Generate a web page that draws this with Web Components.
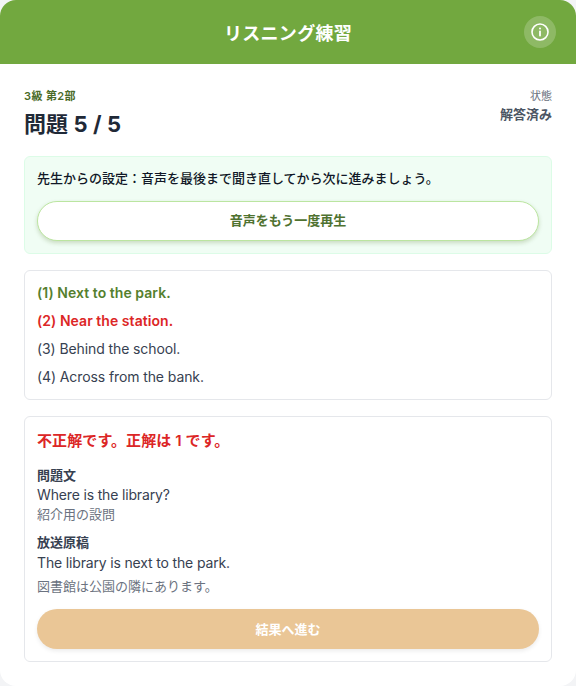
<!DOCTYPE html>
<html lang="ja">
<head>
<meta charset="utf-8">
<title>リスニング練習</title>
<style>
  html, body { margin: 0; background: #f3f4f6; }
  body { font-family: Inter, "Noto Sans CJK JP", sans-serif; }
</style>
</head>
<body>
<listening-app>
  <app-header slot="header" title="リスニング練習"></app-header>
  <question-status level="3級 第2部" heading="問題 5 / 5" label="状態" state="解答済み"></question-status>
  <teacher-note text="先生からの設定：音声を最後まで聞き直してから次に進みましょう。" action="音声をもう一度再生"></teacher-note>
  <choice-list>
    <choice-item kind="correct">(1) Next to the park.</choice-item>
    <choice-item kind="wrong">(2) Near the station.</choice-item>
    <choice-item>(3) Behind the school.</choice-item>
    <choice-item>(4) Across from the bank.</choice-item>
  </choice-list>
  <answer-panel result="不正解です。正解は 1 です。" action="結果へ進む">
    <answer-block heading="問題文" text="Where is the library?" note="紹介用の設問"></answer-block>
    <answer-block heading="放送原稿" text="The library is next to the park." note="図書館は公園の隣にあります。" spaced></answer-block>
  </answer-panel>
</listening-app>
<script>
  const FONT = 'Inter, "Noto Sans CJK JP", sans-serif';

  class ListeningApp extends HTMLElement {
    constructor() {
      super();
      this.attachShadow({mode: 'open'}).innerHTML = `
        <style>
          :host {
            display: block;
            width: 576px;
            height: 686px;
            background: #fff;
            border-radius: 16px;
            overflow: hidden;
            font-family: ${FONT};
          }
          main {
            display: flex;
            flex-direction: column;
            gap: 16px;
            padding: 24px 24px 0;
          }
        </style>
        <slot name="header"></slot>
        <main><slot></slot></main>
      `;
    }
  }

  class AppHeader extends HTMLElement {
    constructor() {
      super();
      this.attachShadow({mode: 'open'}).innerHTML = `
        <style>
          :host {
            display: flex;
            align-items: center;
            justify-content: center;
            position: relative;
            height: 64px;
            background: #72a83f;
            color: #fff;
          }
          h1 { margin: 0; font-size: 18px; font-weight: 700; letter-spacing: .3px; }
          button {
            position: absolute;
            right: 20px;
            top: 16px;
            width: 32px;
            height: 32px;
            padding: 0;
            display: flex;
            align-items: center;
            justify-content: center;
            border: 0;
            border-radius: 50%;
            background: rgba(255, 255, 255, .2);
          }
        </style>
        <h1>${this.getAttribute('title')}</h1>
        <button aria-label="info">
          <svg width="20" height="20" viewBox="0 0 20 20" fill="none" stroke="#fff" stroke-width="1.6" stroke-linecap="round">
            <circle cx="10" cy="10" r="8"/>
            <path d="M10 9.5v4" stroke-width="1.8"/>
            <path d="M10 6.4v.1" stroke-width="2"/>
          </svg>
        </button>
      `;
    }
  }

  class QuestionStatus extends HTMLElement {
    constructor() {
      super();
      const a = n => this.getAttribute(n);
      this.attachShadow({mode: 'open'}).innerHTML = `
        <style>
          :host {
            display: flex;
            justify-content: space-between;
            align-items: flex-start;
            height: 52px;
          }
          .level { font-size: 11px; line-height: 16px; font-weight: 600; color: #4a6b28; letter-spacing: .4px; }
          h2 { margin: 4px 0 0; font-size: 22px; line-height: 33px; font-weight: 700; color: #1f2937; letter-spacing: .1px; }
          .side { text-align: right; }
          .label { font-size: 11px; line-height: 16px; color: #6b7280; }
          .state { font-size: 13px; line-height: 20px; font-weight: 600; color: #4b5563; }
        </style>
        <div>
          <div class="level">${a('level')}</div>
          <h2>${a('heading')}</h2>
        </div>
        <div class="side">
          <div class="label">${a('label')}</div>
          <div class="state">${a('state')}</div>
        </div>
      `;
    }
  }

  class TeacherNote extends HTMLElement {
    constructor() {
      super();
      const a = n => this.getAttribute(n);
      this.attachShadow({mode: 'open'}).innerHTML = `
        <style>
          :host {
            display: block;
            padding: 12px;
            background: #f0fdf4;
            border: 1px solid #dcfce7;
            border-radius: 6px;
          }
          p { margin: 0 0 14px; font-size: 13px; line-height: 18px; font-weight: 500; color: #111827; }
          button {
            display: block;
            width: 100%;
            height: 40px;
            padding: 0 0 2px;
            border: 1px solid #bbe5a0;
            border-radius: 20px;
            background: #fff;
            font: 600 13px/20px ${FONT};
            color: #4f7230;
            box-shadow: 0 2px 4px rgba(63, 98, 18, .22);
          }
        </style>
        <p>${a('text')}</p>
        <button>${a('action')}</button>
      `;
    }
  }

  class ChoiceList extends HTMLElement {
    constructor() {
      super();
      this.attachShadow({mode: 'open'}).innerHTML = `
        <style>
          :host {
            display: flex;
            flex-direction: column;
            gap: 8px;
            padding: 12px;
            background: #fff;
            border: 1px solid #e5e7eb;
            border-radius: 6px;
          }
        </style>
        <slot></slot>
      `;
    }
  }

  class ChoiceItem extends HTMLElement {
    constructor() {
      super();
      this.attachShadow({mode: 'open'}).innerHTML = `
        <style>
          :host { display: block; font-size: 14px; line-height: 20px; color: #374151; letter-spacing: -.1px; }
          :host([kind="correct"]) { font-weight: 600; color: #557f2e; letter-spacing: .05px; }
          :host([kind="wrong"]) { font-weight: 600; color: #dc2626; letter-spacing: .05px; }
        </style>
        <slot></slot>
      `;
    }
  }

  class AnswerPanel extends HTMLElement {
    constructor() {
      super();
      const a = n => this.getAttribute(n);
      this.attachShadow({mode: 'open'}).innerHTML = `
        <style>
          :host {
            display: block;
            padding: 12px;
            background: #fff;
            border: 1px solid #e5e7eb;
            border-radius: 6px;
          }
          .result { font-size: 15px; line-height: 24px; font-weight: 600; color: #dc2626; letter-spacing: .1px; margin-bottom: 12px; }
          .blocks { display: flex; flex-direction: column; gap: 8px; }
          button {
            display: block;
            width: 100%;
            height: 40px;
            margin-top: 13px;
            border: 0;
            border-radius: 20px;
            background: #eac696;
            color: #fff;
            font: 700 13px/20px ${FONT};
            box-shadow: 0 2px 4px rgba(0, 0, 0, .08);
          }
        </style>
        <div class="result">${a('result')}</div>
        <div class="blocks"><slot></slot></div>
        <button>${a('action')}</button>
      `;
    }
  }

  class AnswerBlock extends HTMLElement {
    constructor() {
      super();
      const a = n => this.getAttribute(n);
      this.attachShadow({mode: 'open'}).innerHTML = `
        <style>
          :host { display: block; }
          .head { font-size: 13px; line-height: 20px; font-weight: 600; color: #374151; }
          .text { font-size: 14px; line-height: 20px; color: #374151; letter-spacing: -.16px; }
          .note { font-size: 13px; line-height: 20px; color: #6b7280; margin-top: -1px; }
          :host([spaced]) .text { margin-top: 1px; }
          :host([spaced]) .note { margin-top: 3px; }
        </style>
        <div class="head">${a('heading')}</div>
        <div class="text">${a('text')}</div>
        <div class="note">${a('note')}</div>
      `;
    }
  }

  customElements.define('listening-app', ListeningApp);
  customElements.define('app-header', AppHeader);
  customElements.define('question-status', QuestionStatus);
  customElements.define('teacher-note', TeacherNote);
  customElements.define('choice-list', ChoiceList);
  customElements.define('choice-item', ChoiceItem);
  customElements.define('answer-panel', AnswerPanel);
  customElements.define('answer-block', AnswerBlock);
</script>
</body>
</html>
